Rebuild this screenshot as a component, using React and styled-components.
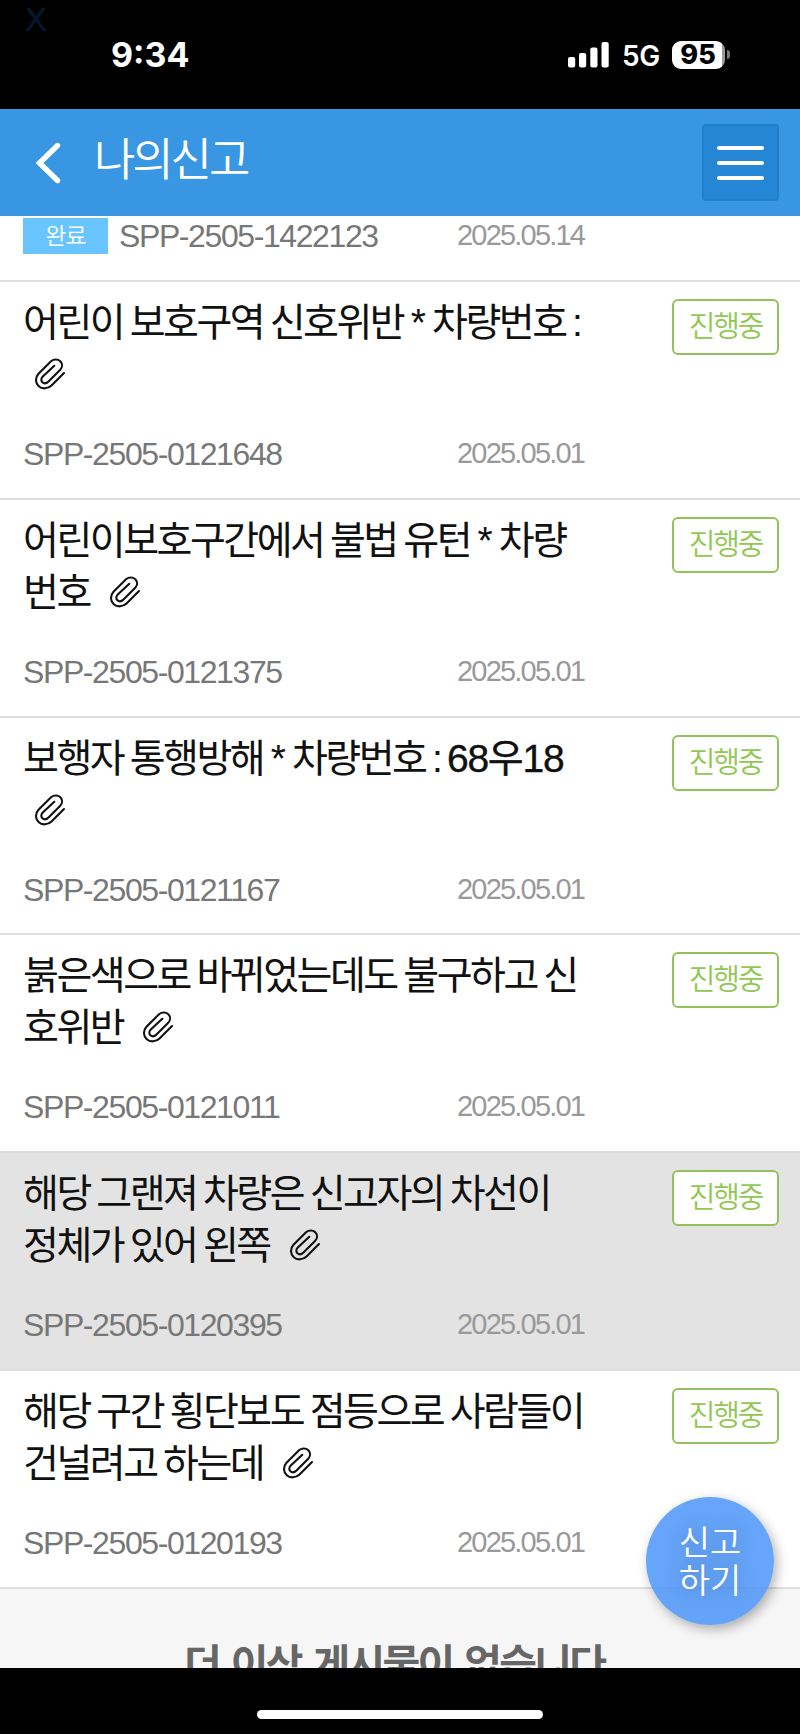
import React from 'react'
import styled, { createGlobalStyle } from 'styled-components';

const GlobalStyle = createGlobalStyle`
* { box-sizing: border-box; }
body {
  margin: 0;
  background: #000;
  font-family: 'Liberation Sans', 'Noto Sans CJK KR', sans-serif;
}
`;
const Screen = styled.div`
  position: relative;
  display: flex;
  flex-direction: column;
  width: 800px;
  height: 1734px;
  overflow: hidden;
  background: #000;
`;
const StatusBar = styled.div`
  position: relative;
  display: flex;
  align-items: center;
  justify-content: space-between;
  flex: none;
  height: 109px;
  padding: 0 70px 0 111px;
  color: #fff;
  font-family: Inter, sans-serif;
`;
const Watermark = styled.span`
  position: absolute;
  left: 25px;
  top: 1px;
  font-family: 'Liberation Sans', sans-serif;
  font-size: 33px;
  line-height: 37px;
  color: #04172b;
  -webkit-text-stroke: 0.6px #04172b;
`;
const Time = styled.span`
  font-size: 34px;
  font-weight: 700;
  line-height: 40px;
`;
const StatusIcons = styled.div`
  display: flex;
  align-items: center;
`;
const Network = styled.span`
  margin: 2px 12px 0 12px;
  font-size: 28px;
  font-weight: 600;
  line-height: 32px;
  letter-spacing: -0.3px;
`;
const Battery = styled.div`
  display: flex;
  align-items: center;
  justify-content: center;
  width: 53px;
  height: 28px;
  padding-right: 1px;
  border-radius: 9px;
  background: linear-gradient(to right, #fff 95%, #999 95%);
  color: #000;
  font-size: 27px;
  font-weight: 800;
  line-height: 28px;
`;
const BatteryCap = styled.div`
  width: 3px;
  height: 9px;
  margin-left: 2px;
  border-radius: 0 4px 4px 0;
  background: #777;
`;
const Header = styled.header`
  display: flex;
  align-items: center;
  flex: none;
  height: 107px;
  padding: 0 21px 0 35px;
  background: #3896e2;
`;
const PageTitle = styled.h1`
  flex: 1;
  margin: -3px 0 0 33px;
  font-size: 45px;
  font-weight: 350;
  line-height: 60px;
  letter-spacing: -3.1px;
  color: #fff;
`;
const MenuButton = styled.button`
  display: flex;
  flex-direction: column;
  align-items: center;
  justify-content: center;
  gap: 11px;
  width: 77px;
  height: 77px;
  padding: 0;
  border: 2px solid #2080ca;
  border-radius: 4px;
  background: #2586d5;
`;
const MenuLine = styled.span`
  width: 47px;
  height: 4px;
  border-radius: 2px;
  background: #fff;
`;
const List = styled.main`
  flex: none;
  height: 1452px;
  overflow: hidden;
  background: #f6f6f6;
`;
const DoneItem = styled.div`
  display: flex;
  height: 66px;
  padding: 2px 0 0 23px;
  border-bottom: 2px solid #dedede;
  background: #fff;
`;
const DoneBadge = styled.span`
  width: 85px;
  height: 36px;
  margin-right: 11px;
  background: #68c5ff;
  color: #fff;
  font-size: 23px;
  font-weight: 350;
  line-height: 37px;
  letter-spacing: -1px;
  text-align: center;
`;
const Item = styled.article`
  display: flex;
  justify-content: space-between;
  height: 217.83px;
  padding: 17px 21px 0 23px;
  border-bottom: 2px solid #dedede;
  background: ${(props) => (props.$active ? '#e3e3e3' : '#fff')};
`;
const ItemBody = styled.div`
  width: 600px;
`;
const Subject = styled.h2`
  height: 104px;
  margin: -2px 0 0;
  font-size: 39px;
  font-weight: 400;
  line-height: 52px;
  letter-spacing: -2.5px;
  word-spacing: -1.8px;
  white-space: pre;
  color: #111;
`;
const Star = styled.span`
  margin: 0 2px 0 1px;
`;
const PlateNo = styled.span`
  letter-spacing: -1.2px;
  -webkit-text-stroke: 0.4px #111;
`;
const ClipIcon = styled.svg`
  width: 32px;
  height: 32px;
  margin-left: ${(props) => (props.$first ? '11px' : '19px')};
  vertical-align: -2px;
`;
const Meta = styled.div`
  display: flex;
  margin-top: ${(props) => props.$top || '0'};
`;
const ReportNo = styled.span`
  width: ${(props) => props.$width || '434px'};
  font-size: 32px;
  line-height: 37px;
  letter-spacing: -1.4px;
  color: #777;
`;
const ReportDate = styled.span`
  font-size: 29px;
  line-height: 35px;
  letter-spacing: -1.8px;
  color: #999;
`;
const State = styled.span`
  width: 107px;
  height: 56px;
  border: 2px solid #92c35b;
  border-radius: 6px;
  background: #fff;
  color: #90c853;
  font-size: 29px;
  font-weight: 350;
  line-height: 52px;
  letter-spacing: -2.2px;
  text-align: center;
`;
const EndText = styled.p`
  margin: 46px 0 0;
  padding-left: 184px;
  font-size: 41px;
  font-weight: 700;
  line-height: 60px;
  letter-spacing: -2.7px;
  word-spacing: 3px;
  white-space: nowrap;
  color: #666;
`;
const ReportButton = styled.button`
  position: absolute;
  left: 646px;
  top: 1497px;
  width: 128px;
  height: 128px;
  padding: 0 0 3px;
  border: 0;
  border-radius: 50%;
  background: rgba(64, 143, 249, 0.8);
  box-shadow: 3px 4px 12px rgba(0, 0, 0, 0.3);
  color: #fff;
  font-family: 'Noto Sans CJK KR', sans-serif;
  font-size: 34px;
  font-weight: 350;
  line-height: 38px;
  text-shadow: 0 0 20px rgba(0, 0, 0, 0.3);
`;
const HomeArea = styled.div`
  display: flex;
  justify-content: center;
  flex: 1;
  padding-top: 42px;
`;
const HomeBar = styled.div`
  width: 286px;
  height: 9px;
  border-radius: 5px;
  background: #fff;
`;

const reports = [
  { lines: ['어린이 보호구역 신호위반 * 차량번호 :', ''], no: 'SPP-2505-0121648', date: '2025.05.01' },
  { lines: ['어린이보호구간에서 불법 유턴 * 차량', '번호'], no: 'SPP-2505-0121375', date: '2025.05.01' },
  { lines: ['보행자 통행방해 * 차량번호 : ', ''], plate: '68우18', no: 'SPP-2505-0121167', date: '2025.05.01' },
  { lines: ['붉은색으로 바뀌었는데도 불구하고 신', '호위반'], no: 'SPP-2505-0121011', date: '2025.05.01' },
  { lines: ['해당 그랜져 차량은 신고자의 차선이', '정체가 있어 왼쪽'], no: 'SPP-2505-0120395', date: '2025.05.01', active: true },
  { lines: ['해당 구간 횡단보도 점등으로 사람들이', '건널려고 하는데'], no: 'SPP-2505-0120193', date: '2025.05.01' },
];

function Clip({ first }) {
  return (
    <ClipIcon $first={first} viewBox="0 0 32 32" fill="none" stroke="#111" strokeWidth="2.1" strokeLinecap="round">
      <path d="M30 15 L17.5 27.5 C14 31 8 31.3 4.8 28.2 C1.2 25 1 19.5 4.5 15.8 L17 3.2 C20 0.8 24 1 26.3 3.2 C28.8 5.8 28.5 9.5 26 12 L14.5 23.5 C12.5 25.5 10 25.7 8.4 24.2 C6.8 22.7 7 20.3 8.8 18.5 L20.3 7.8" />
    </ClipIcon>
  )
}

function FirstLine({ text }) {
  const [before, after] = text.split('*');
  return (
    <>
      {before}
      {after && <><Star>*</Star>{after}</>}
    </>
  )
}

export default function App() {
  return (
    <>
      <GlobalStyle />
      <Screen>
        <StatusBar>
          <Watermark>X</Watermark>
          <Time>9:34</Time>
          <StatusIcons>
            <svg width="42" height="26" viewBox="0 0 42 26" fill="#fff">
              <rect x="0" y="15" width="7.2" height="10.5" rx="2" />
              <rect x="11" y="11" width="7.2" height="14.5" rx="2" />
              <rect x="22.3" y="5.5" width="7.2" height="20" rx="2" />
              <rect x="33.5" y="0" width="7.2" height="25.5" rx="2" />
            </svg>
            <Network>5G</Network>
            <Battery>95</Battery>
            <BatteryCap />
          </StatusIcons>
        </StatusBar>
        <Header>
          <svg width="26" height="42" viewBox="0 0 26 42" fill="none" stroke="#fff" strokeWidth="5.4" strokeLinecap="round">
            <path d="M22.5 3.5 L4.5 21 L22.5 38.5" />
          </svg>
          <PageTitle>나의신고</PageTitle>
          <MenuButton>
            <MenuLine />
            <MenuLine />
            <MenuLine />
          </MenuButton>
        </Header>
        <List>
          <DoneItem>
            <DoneBadge>완료</DoneBadge>
            <Meta>
              <ReportNo $width="338px">SPP-2505-1422123</ReportNo>
              <ReportDate>2025.05.14</ReportDate>
            </Meta>
          </DoneItem>
          {reports.map((x) => (
            <Item key={x.no} $active={x.active}>
              <ItemBody>
                <Subject>
                  <FirstLine text={x.lines[0]} />
                  {x.plate && <PlateNo>{x.plate}</PlateNo>}
                  <br />
                  {x.lines[1]}
                  <Clip first={!x.lines[1]} />
                </Subject>
                <Meta $top="35px">
                  <ReportNo>{x.no}</ReportNo>
                  <ReportDate>{x.date}</ReportDate>
                </Meta>
              </ItemBody>
              <State>진행중</State>
            </Item>
          ))}
          <EndText>더 이상 게시물이 없습니다</EndText>
        </List>
        <HomeArea>
          <HomeBar />
        </HomeArea>
        <ReportButton>신고<br />하기</ReportButton>
      </Screen>
    </>
  )
}
